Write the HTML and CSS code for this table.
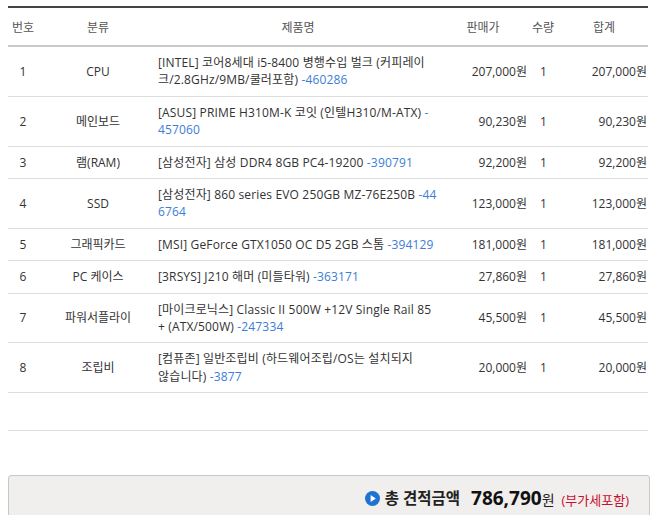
FILE: index.html
```html
<!DOCTYPE html>
<html lang="ko">
<head>
<meta charset="utf-8">
<link rel="stylesheet" href="styles.css">
</head>
<body>
<table class="est">
  <colgroup>
    <col class="w-no"><col class="w-cat"><col class="w-name"><col class="w-price"><col class="w-qty"><col class="w-sum">
  </colgroup>
  <thead>
    <tr>
      <th class="h-no">번호</th>
      <th class="h-cat">분류</th>
      <th class="h-name">제품명</th>
      <th class="h-price">판매가</th>
      <th class="h-qty">수량</th>
      <th class="h-sum">합계</th>
    </tr>
  </thead>
  <tbody>
    <tr>
      <td class="c-no">1</td><td class="c-cat">CPU</td>
      <td class="c-name">[INTEL] 코어8세대 i5-8400 병행수입 벌크 (커피레이<br>크/2.8GHz/9MB/쿨러포함) <span class="code">-460286</span></td>
      <td class="c-price">207,000원</td><td class="c-qty">1</td><td class="c-sum">207,000원</td>
    </tr>
    <tr>
      <td class="c-no">2</td><td class="c-cat">메인보드</td>
      <td class="c-name">[ASUS] PRIME H310M-K 코잇 (인텔H310/M-ATX) <span class="code">-<br>457060</span></td>
      <td class="c-price">90,230원</td><td class="c-qty">1</td><td class="c-sum">90,230원</td>
    </tr>
    <tr>
      <td class="c-no">3</td><td class="c-cat">램(RAM)</td>
      <td class="c-name">[삼성전자] 삼성 DDR4 8GB PC4-19200 <span class="code">-390791</span></td>
      <td class="c-price">92,200원</td><td class="c-qty">1</td><td class="c-sum">92,200원</td>
    </tr>
    <tr>
      <td class="c-no">4</td><td class="c-cat">SSD</td>
      <td class="c-name">[삼성전자] 860 series EVO 250GB MZ-76E250B <span class="code">-44<br>6764</span></td>
      <td class="c-price">123,000원</td><td class="c-qty">1</td><td class="c-sum">123,000원</td>
    </tr>
    <tr>
      <td class="c-no">5</td><td class="c-cat">그래픽카드</td>
      <td class="c-name">[MSI] GeForce GTX1050 OC D5 2GB 스톰 <span class="code">-394129</span></td>
      <td class="c-price">181,000원</td><td class="c-qty">1</td><td class="c-sum">181,000원</td>
    </tr>
    <tr>
      <td class="c-no">6</td><td class="c-cat">PC 케이스</td>
      <td class="c-name">[3RSYS] J210 해머 (미들타워) <span class="code">-363171</span></td>
      <td class="c-price">27,860원</td><td class="c-qty">1</td><td class="c-sum">27,860원</td>
    </tr>
    <tr>
      <td class="c-no">7</td><td class="c-cat">파워서플라이</td>
      <td class="c-name">[마이크로닉스] Classic II 500W +12V Single Rail 85<br>+ (ATX/500W) <span class="code">-247334</span></td>
      <td class="c-price">45,500원</td><td class="c-qty">1</td><td class="c-sum">45,500원</td>
    </tr>
    <tr>
      <td class="c-no">8</td><td class="c-cat">조립비</td>
      <td class="c-name">[컴퓨존] 일반조립비 (하드웨어조립/OS는 설치되지<br>않습니다) <span class="code">-3877</span></td>
      <td class="c-price">20,000원</td><td class="c-qty">1</td><td class="c-sum">20,000원</td>
    </tr>
    <tr class="empty"><td colspan="6"></td></tr>
  </tbody>
</table>

<div class="total">
  <svg class="play" width="15" height="15" viewBox="0 0 15 15" aria-hidden="true">
    <circle cx="7.5" cy="7.5" r="7.5" fill="#1f72cf"/>
    <path d="M5.6 4.1 L10.8 7.5 L5.6 10.9 Z" fill="#fff"/>
  </svg>
  <span class="t-label">총 견적금액</span>
  <span class="t-amount">786,790</span><span class="t-won">원</span>
  <span class="t-vat">(부가세포함)</span>
</div>
</body>
</html>
```

FILE: styles.css
```css
html, body {
  margin: 0;
  padding: 0;
  background: #fff;
}
body {
  padding: 6px 8px 0 8px;
  font-family: "Open Sans", "Noto Sans CJK KR", sans-serif;
  font-size: 12px;
  color: #333;
}
.est {
  width: 640px;
  border-collapse: collapse;
  table-layout: fixed;
  border-top: 2px solid #444;
}
.w-no { width: 30px; }
.w-cat { width: 120px; }
.w-name { width: 290px; }
.w-price { width: 84px; }
.w-qty { width: 28px; }
.w-sum { width: 88px; }

.est th {
  font-weight: normal;
  color: #555;
  height: 35px;
  padding: 2px 0 0 0;
  line-height: 18px;
  border-bottom: 2px solid #c9c9c9;
  white-space: nowrap;
  text-align: center;
  vertical-align: middle;
}
.est .h-name { padding-right: 10px; }
.est .h-price { padding-right: 14px; }
.est .h-qty { padding-right: 6px; }

.est td {
  padding: 7px 0;
  line-height: 17.4px;
  border-bottom: 1px solid #ddd;
  vertical-align: middle;
}
.est .c-no { text-align: center; }
.est .c-cat { text-align: center; }
.est .c-name {
  text-align: left;
  padding-right: 4px;
  letter-spacing: 0.15px;
  white-space: nowrap;
}
.est .c-price { text-align: right; padding-right: 5px; white-space: nowrap; }
.est .c-qty { text-align: left; padding-left: 8px; }
.est .c-sum { text-align: right; padding-right: 1px; white-space: nowrap; }
.code { color: #3b7dd8; }
.est .empty td { height: 37px; padding: 0; }

.total {
  margin-top: 44px;
  height: 60px;
  border: 1px solid #c8c8c8;
  border-radius: 3px;
  background: #f0efee;
  display: flex;
  align-items: flex-start;
  justify-content: flex-end;
  padding: 12px 20px 0 0;
  box-sizing: content-box;
  width: 620px;
  white-space: nowrap;
}
.play { margin-top: 3px; margin-right: 5px; flex: none; }
.t-label {
  font-size: 15.5px;
  font-weight: bold;
  color: #222;
  line-height: 20px;
  margin-right: 11px;
}
.t-amount {
  font-size: 19px;
  font-weight: bold;
  color: #111;
  line-height: 20px;
}
.t-won {
  font-size: 14px;
  color: #222;
  line-height: 20px;
  margin-top: 2px;
  margin-right: 7px;
}
.t-vat {
  font-size: 13px;
  color: #c8102e;
  line-height: 20px;
  margin-top: 2px;
}
```
